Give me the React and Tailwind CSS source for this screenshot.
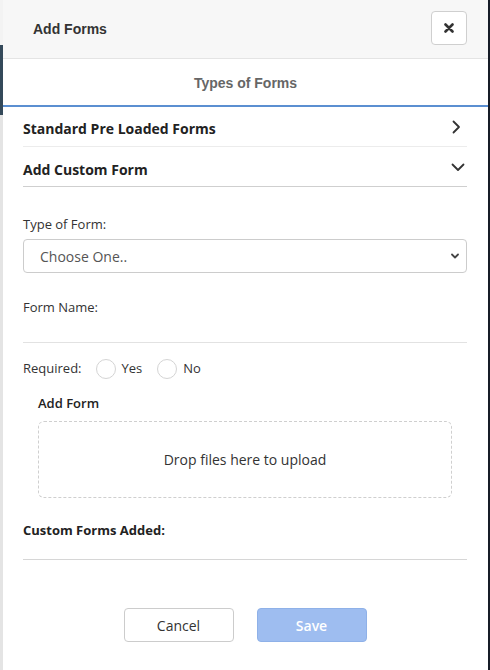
import React from "react";

const open = { fontFamily: '"Open Sans", "Noto Sans", sans-serif' };
const arial = { fontFamily: '"Liberation Sans", Arial, sans-serif' };

function Chevron({ dir }) {
  return (
    <svg width="14" height="14" viewBox="0 0 14 14" fill="none" stroke="#333" strokeWidth="1.8" strokeLinecap="round" strokeLinejoin="round">
      {dir === "right" ? <path d="M4.5 1.5 L10 7 L4.5 12.5" /> : <path d="M1.5 4.5 L7 10 L12.5 4.5" />}
    </svg>
  );
}

function Radio({ label }) {
  return (
    <div className="flex items-center">
      <span className="w-[20px] h-[20px] rounded-full border border-[#d4d4d4] bg-white" />
      <span className="ml-[6px] text-[13px] text-[#333]">{label}</span>
    </div>
  );
}

export default function App() {
  return (
    <div className="flex w-[490px] h-[670px] overflow-hidden bg-white">
      <div className="w-[3px] h-full flex flex-col bg-[#e6e6e6]">
        <div className="h-[45px] bg-[#f3f3f3]" />
        <div className="h-[70px] bg-[#34495a]" />
        <div className="flex-1 bg-[#e4e4e4]" />
      </div>
      <div className="w-[485px] h-full flex flex-col bg-white" style={open}>
        <div className="h-[59px] bg-[#f7f7f7] border-b border-[#e4e4e4] flex items-center justify-between pl-[30px] pr-[21px]">
          <span className="text-[14px] font-bold text-[#333]" style={arial}>Add Forms</span>
          <button className="w-[36px] h-[34px] bg-white border border-[#cfcfcf] rounded-[4px] flex items-center justify-center mb-[3px]">
            <svg width="10" height="10" viewBox="0 0 10 10" stroke="#333" strokeWidth="2.6" strokeLinecap="round">
              <path d="M1.5 1.5 L8.5 8.5 M8.5 1.5 L1.5 8.5" />
            </svg>
          </button>
        </div>
        <div className="h-[48px] border-b-2 border-[#5b8fd1] flex items-center justify-center pt-[2px]">
          <span className="text-[14px] font-bold text-[#666]" style={arial}>Types of Forms</span>
        </div>
        <div className="pl-[20px] pr-[21px] flex flex-col flex-1">
          <div className="h-[40px] border-b border-[#ececec] flex items-center justify-between">
            <span className="text-[14px] font-bold text-[#222] pt-[4px]">Standard Pre Loaded Forms</span>
            <span className="mr-[4px]"><Chevron dir="right" /></span>
          </div>
          <div className="h-[40px] border-b border-[#cfcfcf] flex items-center justify-between">
            <span className="text-[14px] font-bold text-[#222] pt-[5px]">Add Custom Form</span>
            <span className="mr-[2px]"><Chevron dir="down" /></span>
          </div>
          <div className="mt-[28px] text-[13px] text-[#333] leading-[18px]">Type of Form:</div>
          <div className="mt-[6px] h-[34px] border border-[#cccccc] rounded-[4px] flex items-center justify-between pl-[16px] pr-[6px]">
            <span className="text-[14px] text-[#555]">Choose One..</span>
            <svg width="10" height="10" viewBox="0 0 10 10" fill="none" stroke="#444" strokeWidth="1.8" strokeLinecap="round" strokeLinejoin="round">
              <path d="M2 3.5 L5 6.5 L8 3.5" />
            </svg>
          </div>
          <div className="mt-[25px] text-[13px] text-[#333] leading-[18px]">Form Name:</div>
          <div className="mt-[26px] border-b border-[#e2e2e2]" />
          <div className="mt-[15px] flex items-center h-[22px]">
            <span className="text-[13px] text-[#333] mr-[14px]">Required:</span>
            <Radio label="Yes" />
            <span className="w-[15px]" />
            <Radio label="No" />
          </div>
          <div className="mt-[14px] pl-[15px] text-[13px] font-semibold text-[#222] leading-[18px]">Add Form</div>
          <div className="mt-[9px] mx-[15px] h-[77px] border border-dashed border-[#cfcfcf] rounded-[6px] flex items-center justify-center">
            <span className="text-[14px] text-[#333]">Drop files here to upload</span>
          </div>
          <div className="mt-[23px] text-[13px] font-bold text-[#222] leading-[18px]">Custom Forms Added:</div>
          <div className="mt-[20px] border-b border-[#d6d6d6]" />
          <div className="mt-[48px] flex justify-center gap-[23px]">
            <button className="w-[110px] h-[34px] border border-[#cccccc] rounded-[4px] bg-white text-[14px] text-[#333]">Cancel</button>
            <button className="w-[110px] h-[34px] border border-[#8fb1e8] rounded-[4px] bg-[#9ebdf0] text-[14px] font-semibold text-white">Save</button>
          </div>
        </div>
      </div>
      <div className="w-[2px] h-full bg-[#161c27]" />
    </div>
  );
}
